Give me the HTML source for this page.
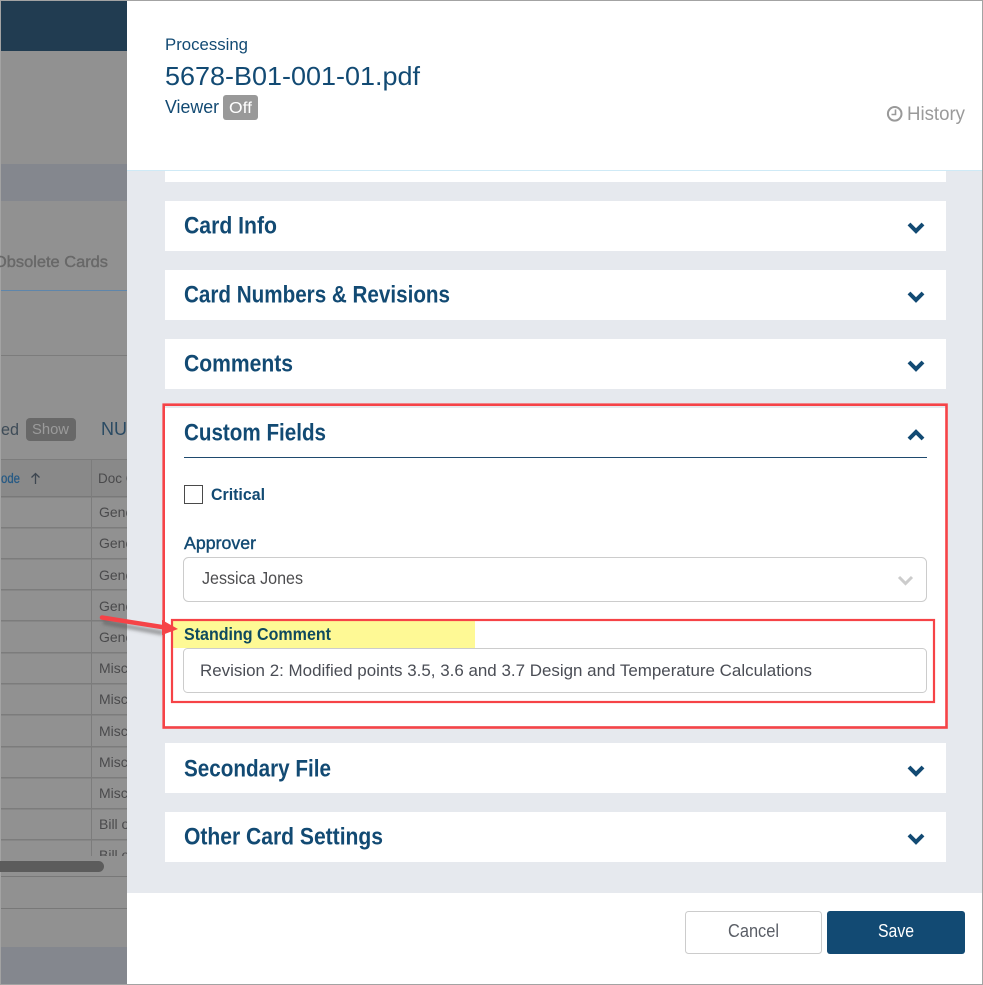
<!DOCTYPE html>
<html><head><meta charset="utf-8"><title>Processing</title>
<style>
html,body{margin:0;padding:0;background:#fff;width:983px;height:985px;overflow:hidden}
svg{display:block;font-family:"Liberation Sans",sans-serif}
text{white-space:pre}
.h{font-size:24px;font-weight:700;fill:#124a73}
.g{font-size:14px;fill:#4a4a4c}
</style></head><body>
<svg width="983" height="985" viewBox="0 0 983 985" xmlns="http://www.w3.org/2000/svg">
<defs><filter id="s" x="-20%" y="-50%" width="140%" height="220%"><feGaussianBlur stdDeviation="1.500"/></filter></defs>
<!-- backdrop -->
<rect width="983" height="985" fill="#a3a3a3"/>
<rect x="1" y="1" width="127" height="983" fill="#919191"/>
<rect x="1" y="1" width="127" height="50" fill="#213c51"/>
<rect x="1" y="164" width="127" height="37" fill="#84878e"/>
<text x="-6" y="267" font-size="16" fill="#686868" stroke="#686868" stroke-width=".4" textLength="114" lengthAdjust="spacingAndGlyphs">Obsolete Cards</text>
<rect x="1" y="290" width="127" height="1" fill="#5f86ab"/>
<rect x="1" y="355" width="127" height="1" fill="#7c7c7c"/>
<text x="1" y="435" font-size="17" fill="#3e4c58" textLength="18" lengthAdjust="spacingAndGlyphs">ed</text>
<rect x="26" y="418" width="50" height="23" rx="4" fill="#686868"/>
<text x="32" y="434" font-size="15" fill="#9b9b9b" textLength="37" lengthAdjust="spacingAndGlyphs">Show</text>
<text x="101" y="435" font-size="18" fill="#2a4a63">NUM</text>
<rect x="1" y="460" width="127" height="37" fill="#898989"/>
<rect x="1" y="459" width="127" height="1" fill="#7c7c7c"/>
<rect x="1" y="496" width="127" height="1.500" fill="#797979"/>
<text x="1" y="483" font-size="13.500" fill="#265a85" stroke="#265a85" stroke-width=".3" textLength="19" lengthAdjust="spacingAndGlyphs">ode</text>
<path d="M35.500 484V473.500M31.500 477.500l4-4 4 4" fill="none" stroke="#3d4650" stroke-width="1.300"/>
<text x="98" y="483" font-size="13.500" fill="#4a4a4c">Doc Code</text>
<g fill="#7c7c7c">
<rect x="1" y="527" width="127" height="1.500"/><rect x="1" y="558" width="127" height="1.500"/><rect x="1" y="589" width="127" height="1.500"/><rect x="1" y="620" width="127" height="1.500"/><rect x="1" y="652" width="127" height="1.500"/><rect x="1" y="683" width="127" height="1.500"/><rect x="1" y="714" width="127" height="1.500"/><rect x="1" y="746" width="127" height="1.500"/><rect x="1" y="777" width="127" height="1.500"/><rect x="1" y="808" width="127" height="1.500"/><rect x="1" y="839" width="127" height="1.500"/>
<rect x="91" y="460" width="1" height="396"/>
</g>
<g>
<text class="g" x="99" y="517">General</text><text class="g" x="99" y="548">General</text><text class="g" x="99" y="580">General</text><text class="g" x="99" y="611">General</text><text class="g" x="99" y="642">General</text>
<text class="g" x="99" y="673">Misc</text><text class="g" x="99" y="704">Misc</text><text class="g" x="99" y="736">Misc</text><text class="g" x="99" y="767">Misc</text><text class="g" x="99" y="798">Misc</text>
<text class="g" x="99" y="829">Bill of</text>
<text class="g" x="99" y="860">Bill of</text>
</g>
<rect x="1" y="856" width="127" height="21" fill="#919191"/>
<rect x="-10" y="861" width="114" height="11" rx="5.500" fill="#5c5c5c"/>
<rect x="1" y="876" width="127" height="1" fill="#787878"/>
<rect x="1" y="908" width="127" height="1" fill="#787878"/>
<rect x="1" y="947" width="127" height="37" fill="#84878e"/>

<!-- panel -->
<rect x="127" y="1" width="855" height="983" fill="#fff"/>
<rect x="127" y="171" width="855" height="722" fill="#e6e9ee"/>
<rect x="127" y="170" width="855" height="1" fill="#cfeaf6"/>
<text x="165" y="50" font-size="17" fill="#124a73" textLength="83" lengthAdjust="spacingAndGlyphs">Processing</text>
<text x="165" y="85" font-size="26" fill="#124a73" textLength="255" lengthAdjust="spacingAndGlyphs">5678-B01-001-01.pdf</text>
<text x="165" y="113" font-size="18" fill="#124a73" textLength="54" lengthAdjust="spacingAndGlyphs">Viewer</text>
<rect x="223" y="95" width="35" height="25" rx="3" fill="#999"/>
<text x="229" y="113" font-size="16" fill="#fff" textLength="23" lengthAdjust="spacingAndGlyphs">Off</text>
<circle cx="894.700" cy="113.800" r="6.800" fill="none" stroke="#999" stroke-width="2"/>
<path d="M895.500 109.500v5h-4" fill="none" stroke="#999" stroke-width="1.600"/>
<text x="907" y="120" font-size="19" fill="#9a9a9a" textLength="58" lengthAdjust="spacingAndGlyphs">History</text>

<!-- cards -->
<g fill="#fff">
<rect x="165" y="171" width="781" height="11"/>
<rect x="165" y="201" width="781" height="50"/>
<rect x="165" y="270" width="781" height="50"/>
<rect x="165" y="339" width="781" height="50"/>
<rect x="165" y="408" width="781" height="318"/>
<rect x="165" y="743" width="781" height="50"/>
<rect x="165" y="812" width="781" height="50"/>
</g>
<text class="h" x="184" y="233.500" textLength="93" lengthAdjust="spacingAndGlyphs">Card Info</text>
<text class="h" x="184" y="302.500" textLength="266" lengthAdjust="spacingAndGlyphs">Card Numbers &amp; Revisions</text>
<text class="h" x="184" y="371.500" textLength="109" lengthAdjust="spacingAndGlyphs">Comments</text>
<text class="h" x="184" y="440.500" textLength="142" lengthAdjust="spacingAndGlyphs">Custom Fields</text>
<text class="h" x="184" y="776.500" textLength="147" lengthAdjust="spacingAndGlyphs">Secondary File</text>
<text class="h" x="184" y="844.500" textLength="199" lengthAdjust="spacingAndGlyphs">Other Card Settings</text>
<g fill="none" stroke="#124a73" stroke-width="4">
<path d="M909 224l7 7 7-7"/>
<path d="M909 293l7 7 7-7"/>
<path d="M909 362l7 7 7-7"/>
<path d="M909 439l7-7 7 7"/>
<path d="M909 767l7 7 7-7"/>
<path d="M909 835l7 7 7-7"/>
</g>
<rect x="184" y="457" width="743" height="1" fill="#1f4a6e"/>
<rect x="184.500" y="485.500" width="18" height="18" fill="#fff" stroke="#4a4a4a"/>
<text x="211" y="500" font-size="17" font-weight="700" fill="#124a73" textLength="54" lengthAdjust="spacingAndGlyphs">Critical</text>
<text x="184" y="549" font-size="17.500" fill="#124a73" stroke="#124a73" stroke-width=".4" textLength="72" lengthAdjust="spacingAndGlyphs">Approver</text>
<rect x="183.500" y="557.500" width="743" height="44" rx="5" fill="#fff" stroke="#ccc"/>
<text x="202" y="584" font-size="17.500" fill="#4d4d4f" textLength="101" lengthAdjust="spacingAndGlyphs">Jessica Jones</text>
<path d="M899 577l6.500 6.500 6.500-6.500" fill="none" stroke="#ccc" stroke-width="3"/>

<rect x="173" y="621" width="302" height="27" fill="#fef995"/>
<text x="184" y="640" font-size="17.500" font-weight="700" fill="#0f4a5e" textLength="147" lengthAdjust="spacingAndGlyphs">Standing Comment</text>
<rect x="183.500" y="648.500" width="743" height="44" rx="4" fill="#fff" stroke="#ccc"/>
<text x="200" y="676" font-size="17" fill="#4a4d55" textLength="612" lengthAdjust="spacingAndGlyphs">Revision 2: Modified points 3.5, 3.6 and 3.7 Design and Temperature Calculations</text>

<!-- annotations -->
<rect x="163.700" y="404.700" width="782.800" height="322.800" fill="none" stroke="#f64347" stroke-width="2.600"/>
<rect x="172" y="620" width="762" height="82" fill="none" stroke="#f64347" stroke-width="2.200"/>
<path d="M103 622L163 633" stroke="#555" stroke-opacity=".5" stroke-width="5" filter="url(#s)"/>
<path d="M102 617.500L165 627.500" stroke="#f64347" stroke-width="4.500" stroke-linecap="round"/>
<path d="M178 629L162 620 162 635Z" fill="#f64347"/>

<!-- footer -->
<rect x="685.500" y="911.500" width="136" height="42" rx="3" fill="#fff" stroke="#ccc"/>
<text x="728" y="937" font-size="18.500" fill="#5a5e66" textLength="51" lengthAdjust="spacingAndGlyphs">Cancel</text>
<rect x="827" y="911" width="138" height="43" rx="3" fill="#124a73"/>
<text x="878" y="937" font-size="18.500" fill="#fff" textLength="36" lengthAdjust="spacingAndGlyphs">Save</text>
</svg>
</body></html>
